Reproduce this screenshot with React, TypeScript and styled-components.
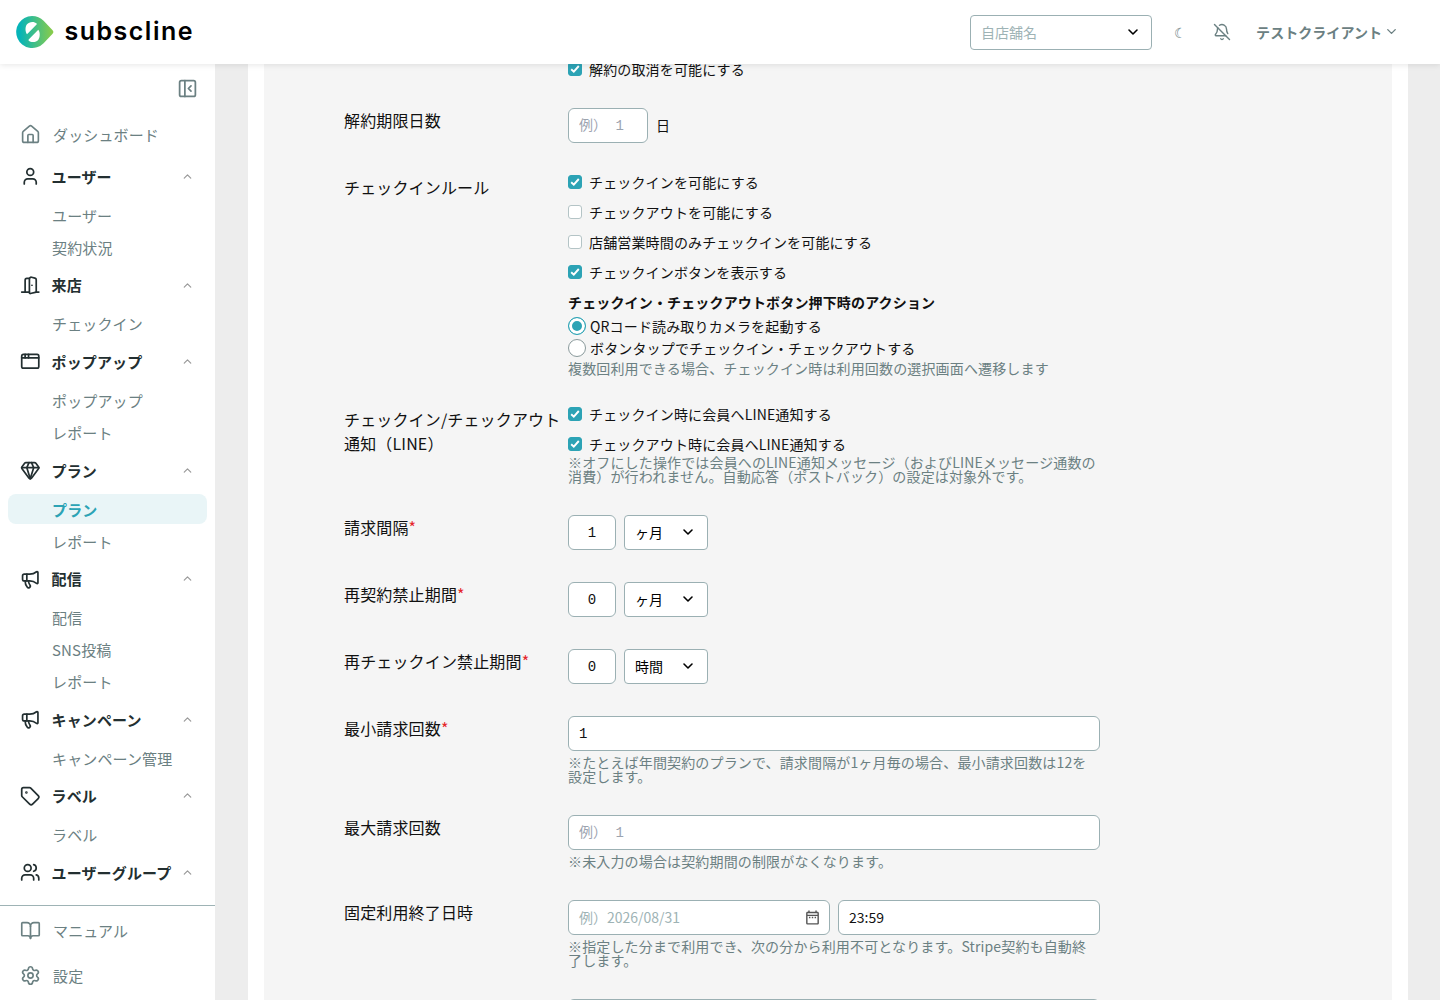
import React from "react";
import styled, { createGlobalStyle } from "styled-components";
import {
  AppWindow, BellOff, BookOpen, ChevronDown, ChevronUp, DoorOpen, Gem, House,
  Megaphone, PanelLeftClose, Settings, Tag, User, Users, type LucideIcon,
} from "lucide-react";
import { MdOutlineDateRange } from "react-icons/md";

const color = {
  teal: "#2ca3b5",
  tealSoft: "#e9f5f7",
  muted: "#6b8082",
  faint: "#9eb3b5",
  border: "#9bb0b3",
  ink: "#232f31",
  page: "#ededed",
  panel: "#f5f5f5",
};

const GlobalStyle = createGlobalStyle`
  *, *::before, *::after { box-sizing: border-box; }
  body {
    margin: 0;
    background: ${color.page};
    color: #111;
    font-family: "Noto Sans CJK JP", "Noto Sans", sans-serif;
    font-size: 16px;
    line-height: 1.5;
  }
`;

const Shell = styled.div`
  height: 1000px;
  display: flex;
  flex-direction: column;
  overflow: hidden;
`;

const Header = styled.header`
  position: relative;
  z-index: 2;
  flex: none;
  height: 64px;
  padding: 0 41px 0 16px;
  display: flex;
  align-items: center;
  background: #fff;
  box-shadow: 0 1px 6px rgba(0, 0, 0, 0.1);
`;

const HeaderTools = styled.div`
  margin-left: auto;
  display: flex;
  align-items: center;
`;

const Moon = styled.span`
  width: 54px;
  padding-left: 3px;
  text-align: center;
  font-size: 14px;
  line-height: 20px;
  color: ${color.muted};
`;

const BellButton = styled.span`
  display: flex;
  margin-left: 7px;
  margin-right: 25px;
  color: ${color.muted};
`;

const Account = styled.span`
  display: flex;
  align-items: center;
  gap: 2px;
  font-size: 14px;
  font-weight: 700;
  letter-spacing: 0.05px;
  color: ${color.muted};
  svg { margin-bottom: 2px; }
`;

const Body = styled.div`
  flex: 1;
  min-height: 0;
  display: flex;
`;

const Sidebar = styled.aside`
  width: 215px;
  flex: none;
  display: flex;
  flex-direction: column;
  background: #fff;
  letter-spacing: 0.14px;
`;

const CollapseBar = styled.div`
  flex: none;
  height: 48px;
  padding: 0 17.5px 0 0;
  display: flex;
  justify-content: flex-end;
  align-items: center;
  color: ${color.muted};
`;

const NavScroll = styled.div`
  flex: 1;
  min-height: 0;
  overflow: hidden;
`;

const NavLink = styled.div`
  height: 45px;
  padding-left: 20px;
  display: flex;
  align-items: center;
  gap: 12px;
  font-size: 15px;
  color: ${color.muted};
`;

const NavText = styled.span`
  padding-top: 1px;
`;

const Groups = styled.div`
  padding-top: 0.4px;
`;

const GroupHead = styled.div`
  height: 38.5px;
  padding: 0 21.5px 0 19.5px;
  display: flex;
  align-items: center;
  font-size: 15px;
  font-weight: 700;
  color: ${color.ink};
`;

const GroupTitle = styled.span`
  flex: 1;
  margin-left: 11.5px;
  padding-top: 1.1px;
  white-space: nowrap;
`;

const GroupItems = styled.div`
  padding: 4px 8px 2.05px;
`;

const SubItem = styled.div<{ $active?: boolean }>`
  height: 30.5px;
  margin-bottom: 1.5px;
  padding-left: 44px;
  border-radius: 8px;
  font-size: 15px;
  line-height: 31.3px;
  font-weight: ${(p) => (p.$active ? 700 : 400)};
  color: ${(p) => (p.$active ? color.teal : color.muted)};
  background: ${(p) => (p.$active ? color.tealSoft : "transparent")};
`;

const NavFooter = styled.div`
  flex: none;
  height: 95px;
  padding-top: 2px;
  border-top: 1px solid ${color.faint};
`;

const Main = styled.main`
  flex: 1;
  padding: 0 32px 0 33px;
  overflow: hidden;
`;

const Card = styled.div`
  height: 100%;
  padding: 0 16px;
  background: #fff;
  overflow: hidden;
`;

const Form = styled.div`
  height: calc(100% + 2px);
  margin-top: -2px;
  padding: 0 80px;
  display: flex;
  flex-direction: column;
  gap: 32px;
  background: ${color.panel};
  letter-spacing: 0.15px;
`;

const FormRow = styled.div<{ $height?: number }>`
  flex: none;
  display: grid;
  grid-template-columns: 224px 532px;
  height: ${(p) => (p.$height ? `${p.$height}px` : "auto")};
`;

const Label = styled.div`
  padding-right: 4px;
  white-space: pre;
  font-size: 16px;
  line-height: 24px;
`;

const Required = styled.span`
  color: #e5252a;
`;

const Field = styled.div`
  font-size: 14px;
  line-height: 14px;
`;

const CheckList = styled.div`
  display: flex;
  flex-direction: column;
  gap: 16px;
`;

const CheckRow = styled.label`
  display: flex;
  align-items: center;
  gap: 7px;
  height: 14px;
  white-space: nowrap;
`;

const CheckBox = styled.span<{ $on?: boolean }>`
  width: 14px;
  height: 14px;
  display: flex;
  flex: none;
  border-radius: 3px;
  border: 1px solid ${(p) => (p.$on ? color.teal : "#b4c4c6")};
  background: ${(p) => (p.$on ? color.teal : "#fff")};
`;

const SubHeading = styled.div`
  margin: 16px 0 8px;
  font-weight: 700;
`;

const RadioRow = styled.label`
  display: flex;
  align-items: center;
  gap: 4px;
  height: 18px;
  margin-bottom: 4px;
`;

const Radio = styled.span<{ $on?: boolean }>`
  width: 18px;
  height: 18px;
  flex: none;
  border-radius: 50%;
  border: 1px solid ${(p) => (p.$on ? color.teal : "#8a9a9c")};
  background: ${(p) => (p.$on ? color.teal : "#fff")};
  box-shadow: ${(p) => (p.$on ? "inset 0 0 0 3px #fff" : "none")};
`;

const Hint = styled.div`
  margin-top: 4px;
  color: ${color.muted};
`;

const Inline = styled.div`
  display: flex;
  align-items: center;
  gap: 8px;
`;

const Unit = styled.span`
  padding-bottom: 1px;
`;

const Input = styled.input<{ $width?: number; $mono?: boolean; $center?: boolean }>`
  width: ${(p) => (p.$width ? `${p.$width}px` : "100%")};
  height: 35px;
  padding: ${(p) => (p.$mono ? "0 10px" : "0 10px 1px")};
  border: 1px solid ${color.border};
  border-radius: 6px;
  background: #fff;
  color: #111;
  outline: none;
  font-family: ${(p) => (p.$mono ? '"Liberation Mono", "Noto Sans Mono CJK JP", "Noto Sans CJK JP", monospace' : "inherit")};
  font-size: 14px;
  text-align: ${(p) => (p.$center ? "center" : "left")};
  &::placeholder { color: #9ca3af; opacity: 1; }
`;

const SelectBox = styled.div<{ $width: number; $empty?: boolean }>`
  width: ${(p) => p.$width}px;
  height: 35px;
  padding: ${(p) => (p.$empty ? "0 10px 0 10px" : "0 11px 2px 10px")};
  display: flex;
  align-items: center;
  justify-content: space-between;
  border: 1px solid ${color.border};
  border-radius: 4px;
  background: #fff;
  font-size: 14px;
  letter-spacing: 0;
  color: ${(p) => (p.$empty ? color.faint : "#000")};
  svg { color: #000; margin-bottom: ${(p) => (p.$empty ? "1px" : "0")}; }
`;

const DateBox = styled.div`
  width: 262px;
  height: 35px;
  padding: 0 8px 1px 10px;
  display: flex;
  align-items: center;
  justify-content: space-between;
  border: 1px solid ${color.border};
  border-radius: 6px;
  background: #fff;
  letter-spacing: 0;
  color: ${color.faint};
  svg { color: #555; }
`;

function Logo() {
  return (
    <svg width="180" height="40" viewBox="16 12 180 40">
      <defs>
        <linearGradient id="mark" x1="0" x2="1" y1="0" y2="0">
          <stop offset="0.1" stopColor="#06b4b8" />
          <stop offset="1" stopColor="#8ccc48" />
        </linearGradient>
      </defs>
      <path d="M32 16C36.6 16 40.6 17.8 43.6 20.8L52.6 30.2Q54.2 32 52.6 33.7L43.6 43.2A16 16 0 1 1 32 16Z" fill="url(#mark)" />
      <path d="M27 34.2C25.2 32 25 27 26.8 24.6C29.2 21.2 34.4 21.2 36.7 23.6Q37 24.1 36.6 24.6Z" fill="#fff" />
      <path d="M38.3 29.8C40.1 32 40.3 37 38.5 39.4C36.1 42.8 30.9 42.8 28.6 40.4Q28.3 39.9 28.7 39.4Z" fill="#fff" />
      <text x="64.5" y="40" fontFamily="Inter, sans-serif" fontSize="25" fontWeight="600" textLength="128" lengthAdjust="spacing" fill="#000">subscline</text>
    </svg>
  );
}

function Check({ on, children }: { on?: boolean; children: React.ReactNode }) {
  return (
    <CheckRow>
      <CheckBox $on={on}>
        {on && (
          <svg width="12" height="12" viewBox="0 0 12 12">
            <path d="M2.2 6.2 4.8 8.7 9.8 3" fill="none" stroke="#fff" strokeWidth="1.9" />
          </svg>
        )}
      </CheckBox>
      {children}
    </CheckRow>
  );
}

function Select({ width, value, empty }: { width: number; value: string; empty?: boolean }) {
  return (
    <SelectBox $width={width} $empty={empty}>
      {value}
      <ChevronDown size={16} strokeWidth={2.4} />
    </SelectBox>
  );
}

const groups: { icon: LucideIcon; title: string; items: string[]; active?: number }[] = [
  { icon: User, title: "ユーザー", items: ["ユーザー", "契約状況"] },
  { icon: DoorOpen, title: "来店", items: ["チェックイン"] },
  { icon: AppWindow, title: "ポップアップ", items: ["ポップアップ", "レポート"] },
  { icon: Gem, title: "プラン", items: ["プラン", "レポート"], active: 0 },
  { icon: Megaphone, title: "配信", items: ["配信", "SNS投稿", "レポート"] },
  { icon: Megaphone, title: "キャンペーン", items: ["キャンペーン管理"] },
  { icon: Tag, title: "ラベル", items: ["ラベル"] },
  { icon: Users, title: "ユーザーグループ", items: [] },
];

const periods = [
  { label: "請求間隔", value: "1", unit: "ヶ月" },
  { label: "再契約禁止期間", value: "0", unit: "ヶ月" },
  { label: "再チェックイン禁止期間", value: "0", unit: "時間" },
];

export default function App() {
  return (
    <Shell>
      <GlobalStyle />
      <Header>
        <Logo />
        <HeaderTools>
          <Select width={182} value="自店舗名" empty />
          <Moon>☾</Moon>
          <BellButton><BellOff size={18} strokeWidth={1.9} /></BellButton>
          <Account>テストクライアント<ChevronDown size={15} strokeWidth={2.2} /></Account>
        </HeaderTools>
      </Header>
      <Body>
        <Sidebar>
          <CollapseBar><PanelLeftClose size={21} strokeWidth={2} /></CollapseBar>
          <NavScroll>
            <NavLink><House size={21} strokeWidth={1.9} /><NavText>ダッシュボード</NavText></NavLink>
            <Groups>
              {groups.map((g) => (
                <React.Fragment key={g.title}>
                  <GroupHead>
                    <g.icon size={20.5} strokeWidth={2} />
                    <GroupTitle>{g.title}</GroupTitle>
                    <ChevronUp size={13} strokeWidth={2.2} color="#999" />
                  </GroupHead>
                  <GroupItems>
                    {g.items.map((item, i) => (
                      <SubItem key={item} $active={g.active === i}>{item}</SubItem>
                    ))}
                  </GroupItems>
                </React.Fragment>
              ))}
            </Groups>
          </NavScroll>
          <NavFooter>
            <NavLink><BookOpen size={21} strokeWidth={1.9} /><NavText>マニュアル</NavText></NavLink>
            <NavLink><Settings size={21} strokeWidth={1.9} /><NavText>設定</NavText></NavLink>
          </NavFooter>
        </Sidebar>
        <Main>
          <Card>
            <Form>
              <FormRow $height={14}>
                <Label />
                <Field><Check on>解約の取消を可能にする</Check></Field>
              </FormRow>
              <FormRow>
                <Label>解約期限日数</Label>
                <Field><Inline><Input $width={80} $mono placeholder="例） 1" /><Unit>日</Unit></Inline></Field>
              </FormRow>
              <FormRow $height={200}>
                <Label>チェックインルール</Label>
                <Field>
                  <CheckList>
                    <Check on>チェックインを可能にする</Check>
                    <Check>チェックアウトを可能にする</Check>
                    <Check>店舗営業時間のみチェックインを可能にする</Check>
                    <Check on>チェックインボタンを表示する</Check>
                  </CheckList>
                  <SubHeading>チェックイン・チェックアウトボタン押下時のアクション</SubHeading>
                  <RadioRow><Radio $on />QRコード読み取りカメラを起動する</RadioRow>
                  <RadioRow><Radio />ボタンタップでチェックイン・チェックアウトする</RadioRow>
                  <Hint>複数回利用できる場合、チェックイン時は利用回数の選択画面へ遷移します</Hint>
                </Field>
              </FormRow>
              <FormRow $height={76}>
                <Label>{"チェックイン/チェックアウト\n通知（LINE）"}</Label>
                <Field>
                  <CheckList>
                    <Check on>チェックイン時に会員へLINE通知する</Check>
                    <Check on>チェックアウト時に会員へLINE通知する</Check>
                  </CheckList>
                  <Hint>※オフにした操作では会員へのLINE通知メッセージ（およびLINEメッセージ通数の消費）が行われません。自動応答（ポストバック）の設定は対象外です。</Hint>
                </Field>
              </FormRow>
              {periods.map((p) => (
                <FormRow key={p.label}>
                  <Label>{p.label}<Required>*</Required></Label>
                  <Field>
                    <Inline>
                      <Input $width={48} $mono $center defaultValue={p.value} />
                      <Select width={84} value={p.unit} />
                    </Inline>
                  </Field>
                </FormRow>
              ))}
              <FormRow $height={67}>
                <Label>最小請求回数<Required>*</Required></Label>
                <Field>
                  <Inline><Input $mono defaultValue="1" /></Inline>
                  <Hint>※たとえば年間契約のプランで、請求間隔が1ヶ月毎の場合、最小請求回数は12を設定します。</Hint>
                </Field>
              </FormRow>
              <FormRow $height={53}>
                <Label>最大請求回数</Label>
                <Field>
                  <Inline><Input $mono placeholder="例） 1" /></Inline>
                  <Hint>※未入力の場合は契約期間の制限がなくなります。</Hint>
                </Field>
              </FormRow>
              <FormRow $height={67}>
                <Label>固定利用終了日時</Label>
                <Field>
                  <Inline>
                    <DateBox>例）2026/08/31<MdOutlineDateRange size={17} /></DateBox>
                    <Input $width={262} defaultValue="23:59" />
                  </Inline>
                  <Hint>※指定した分まで利用でき、次の分から利用不可となります。Stripe契約も自動終了します。</Hint>
                </Field>
              </FormRow>
              <FormRow>
                <Label />
                <Field><Inline><Input /></Inline></Field>
              </FormRow>
            </Form>
          </Card>
        </Main>
      </Body>
    </Shell>
  );
}
